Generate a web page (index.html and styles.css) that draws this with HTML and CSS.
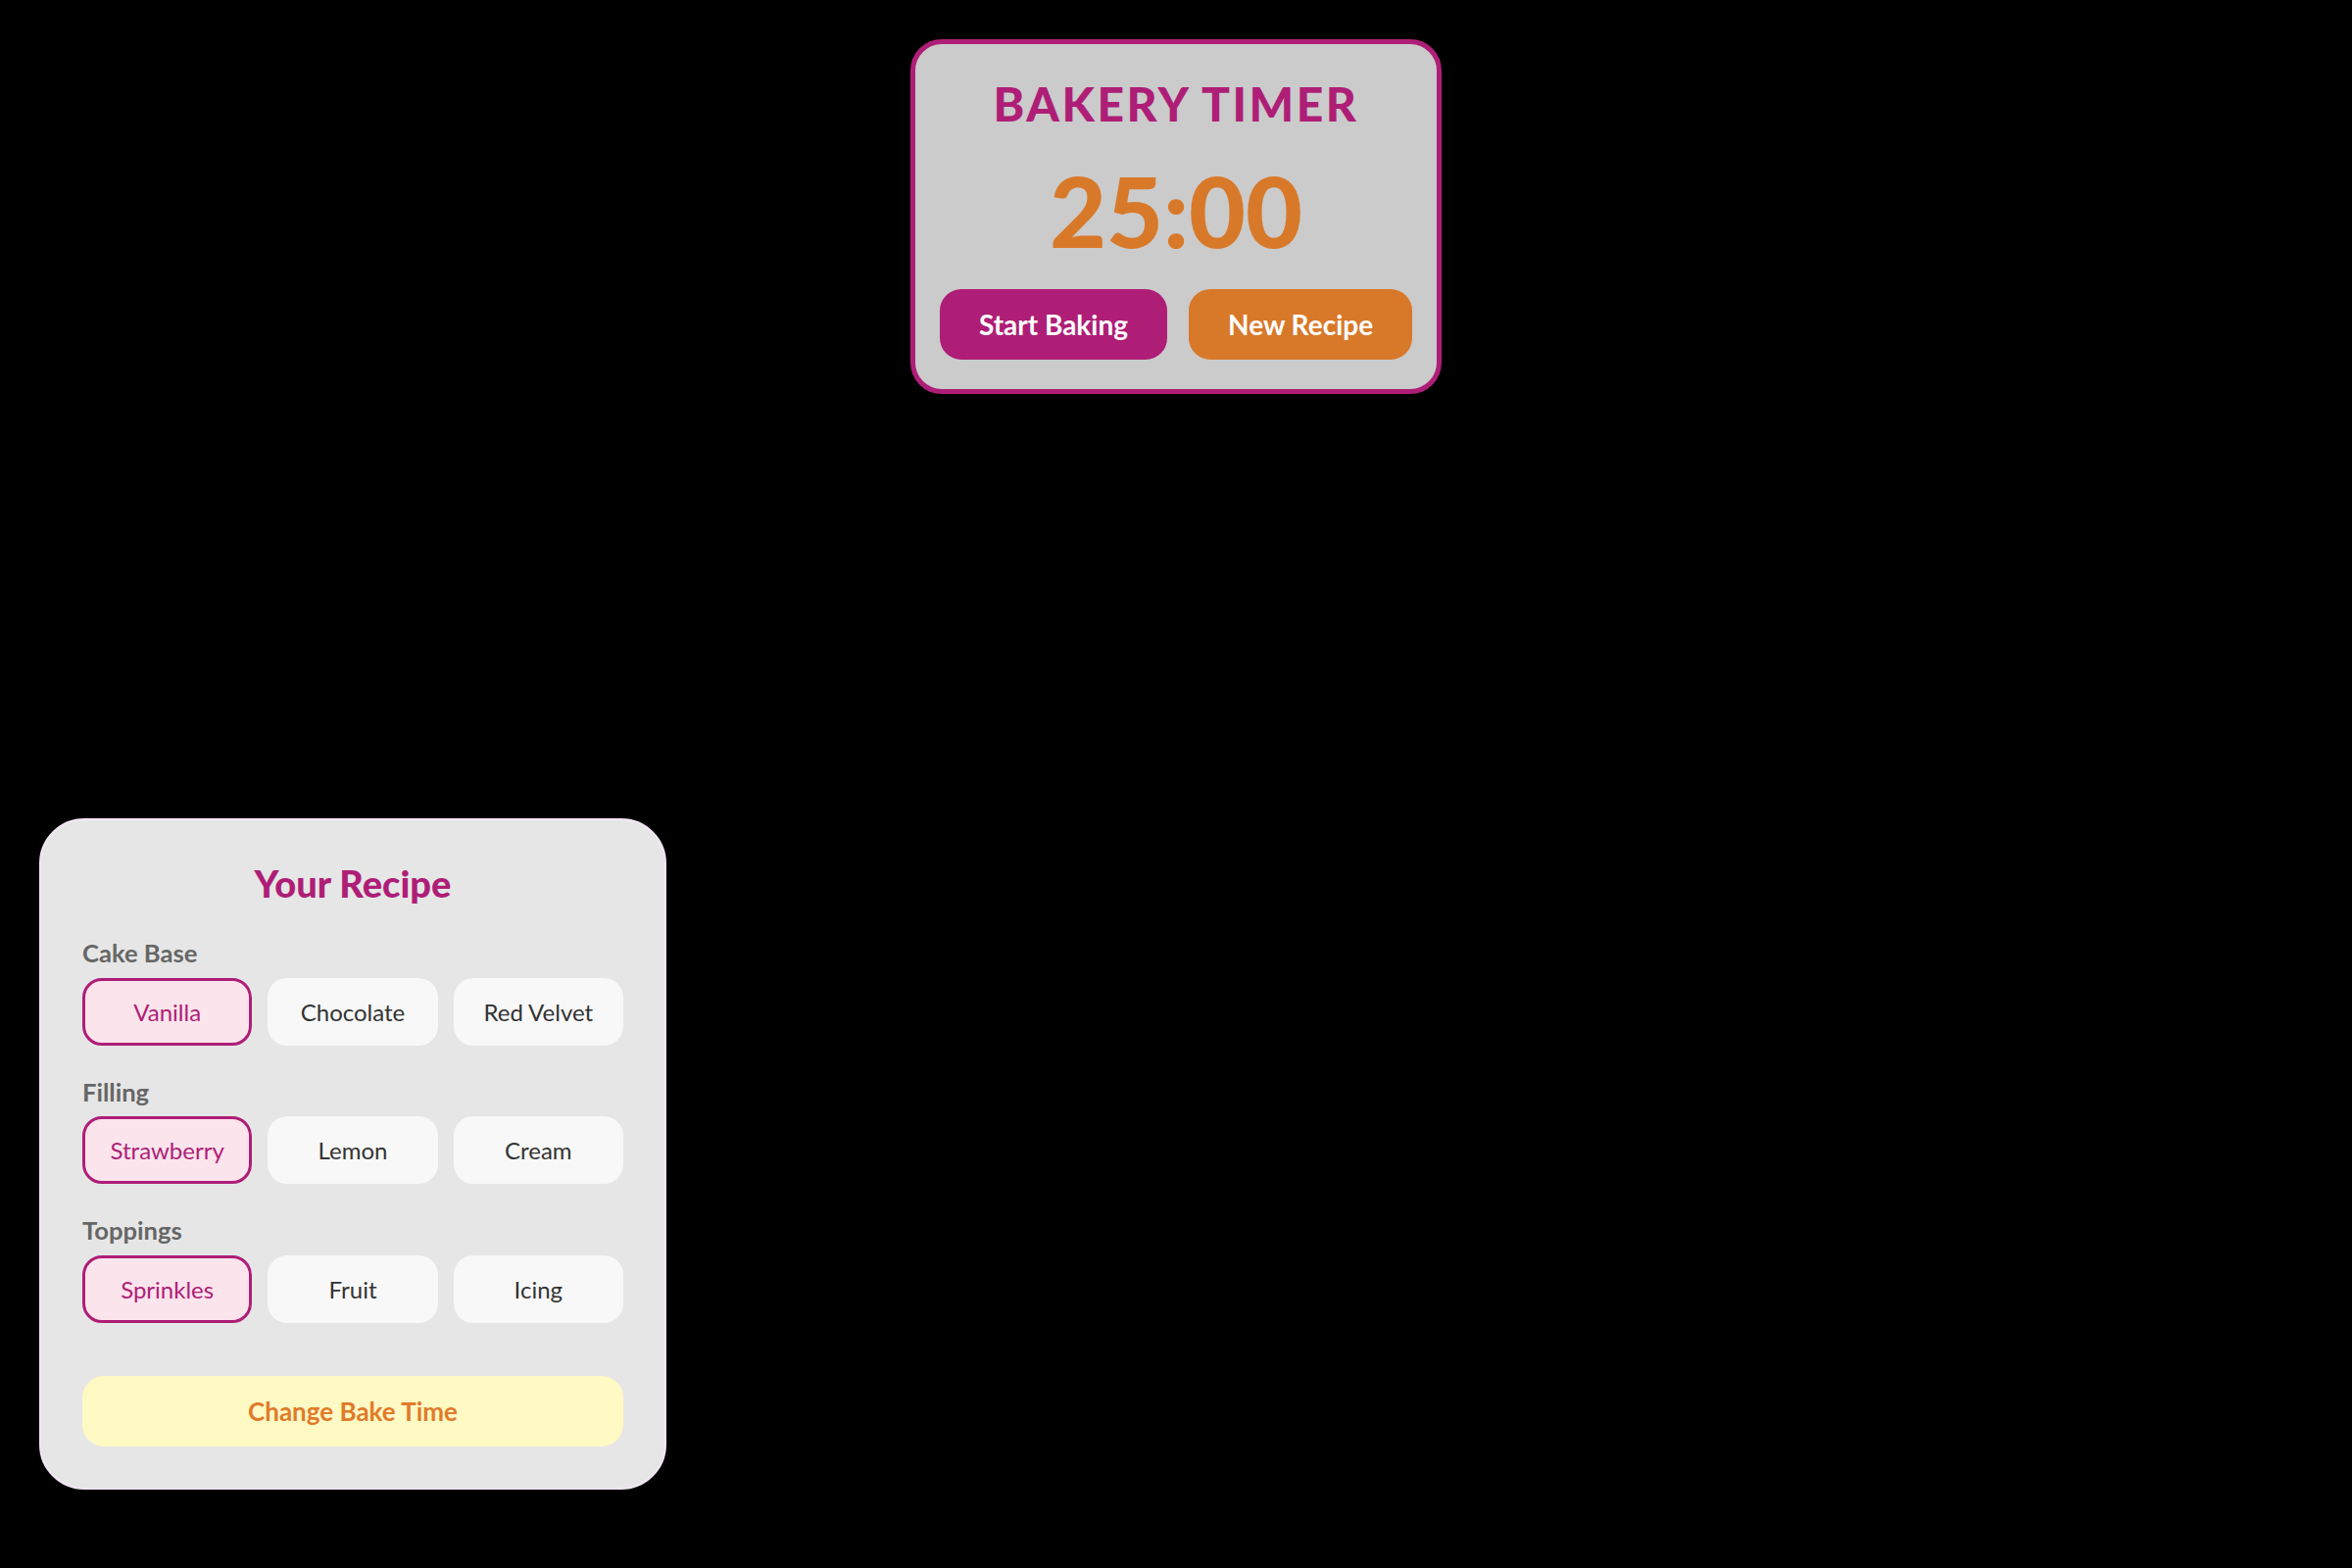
FILE: index.html
```html
<!DOCTYPE html>
<html>
  <head>
    <title>Bakery Timer</title>
    <meta charset="utf-8" />
    <meta name="viewport" content="width=device-width, initial-scale=1.0" />
    <link rel="stylesheet" href="styles.css">
  </head>
  <body>
    <div class="timer-card">
      <h1 class="timer-title">BAKERY TIMER</h1>
      <p class="timer-display">25:00</p>
      <div class="timer-actions">
        <button class="btn btn-start">Start Baking</button>
        <button class="btn btn-new">New Recipe</button>
      </div>
    </div>

    <div class="recipe-card">
      <h2 class="recipe-title">Your Recipe</h2>

      <div class="recipe-group">
        <p class="group-label">Cake Base</p>
        <div class="options">
          <button class="option selected">Vanilla</button>
          <button class="option">Chocolate</button>
          <button class="option">Red Velvet</button>
        </div>
      </div>

      <div class="recipe-group">
        <p class="group-label">Filling</p>
        <div class="options">
          <button class="option selected">Strawberry</button>
          <button class="option">Lemon</button>
          <button class="option">Cream</button>
        </div>
      </div>

      <div class="recipe-group">
        <p class="group-label">Toppings</p>
        <div class="options">
          <button class="option selected">Sprinkles</button>
          <button class="option">Fruit</button>
          <button class="option">Icing</button>
        </div>
      </div>

      <button class="btn-time">Change Bake Time</button>
    </div>

    <script>
      // pick one option per group
      document.querySelectorAll('.options').forEach((group) => {
        group.addEventListener('click', (e) => {
          const opt = e.target.closest('.option');
          if (!opt) return;
          group.querySelectorAll('.option').forEach((o) => o.classList.remove('selected'));
          opt.classList.add('selected');
        });
      });
    </script>
  </body>
</html>
```

FILE: styles.css
```css
* {
  box-sizing: border-box;
}
body {
  background-color: #000;
  font-family: Lato, 'Noto Sans', sans-serif;
  margin: 0;
  padding: 40px 40px 80px;
  min-height: 100vh;
  display: flex;
  flex-direction: column;
}
button {
  font-family: inherit;
  white-space: nowrap;
  cursor: pointer;
}

/* timer */
.timer-card {
  align-self: center;
  width: 542px;
  background-color: #cbcbcb;
  border: 5px solid #ae1e77;
  border-radius: 32px;
  padding: 32px 30px 30px;
  text-align: center;
}
.timer-title {
  margin: 0;
  font-size: 48px;
  line-height: 1.2;
  font-weight: 900;
  letter-spacing: 2.5px;
  color: #ae1e77;
}
.timer-display {
  margin: 29px 0 31px;
  font-size: 100px;
  line-height: 1;
  font-weight: 900;
  color: #d8792a;
}
.timer-actions {
  display: flex;
  justify-content: center;
  gap: 22px;
}
.btn {
  height: 72px;
  padding: 0 40px;
  border: none;
  border-radius: 22px;
  color: #fff;
  font-size: 28px;
  font-weight: 700;
}
.btn-start {
  background-color: #ae1e77;
}
.btn-new {
  background-color: #d8792a;
}

/* recipe panel */
.recipe-card {
  align-self: flex-start;
  margin-top: auto;
  width: 640px;
  background-color: #e6e6e6;
  border: 2px solid #f3e5f5;
  border-radius: 46px;
  padding: 42px;
}
.recipe-title {
  margin: 0 0 32px;
  text-align: center;
  font-size: 38px;
  line-height: 1.2;
  font-weight: 900;
  color: #ae1e77;
}
.recipe-group + .recipe-group {
  margin-top: 32px;
}
.group-label {
  margin: 0 0 10px;
  font-size: 25.6px;
  line-height: 1.2;
  font-weight: 700;
  color: #666;
}
.options {
  display: grid;
  grid-template-columns: repeat(3, 1fr);
  gap: 16px;
}
.option {
  height: 69px;
  background-color: #f8f8f8;
  border: 3px solid transparent;
  border-radius: 20px;
  font-size: 24px;
  color: #333;
}
.option.selected {
  background-color: #fce4ec;
  border-color: #ae1e77;
  color: #ae1e77;
}
.btn-time {
  display: block;
  width: 100%;
  height: 72px;
  margin-top: 54px;
  background-color: #fff9c4;
  border: none;
  border-radius: 22px;
  font-size: 26px;
  font-weight: 700;
  color: #e07b2a;
}
```
